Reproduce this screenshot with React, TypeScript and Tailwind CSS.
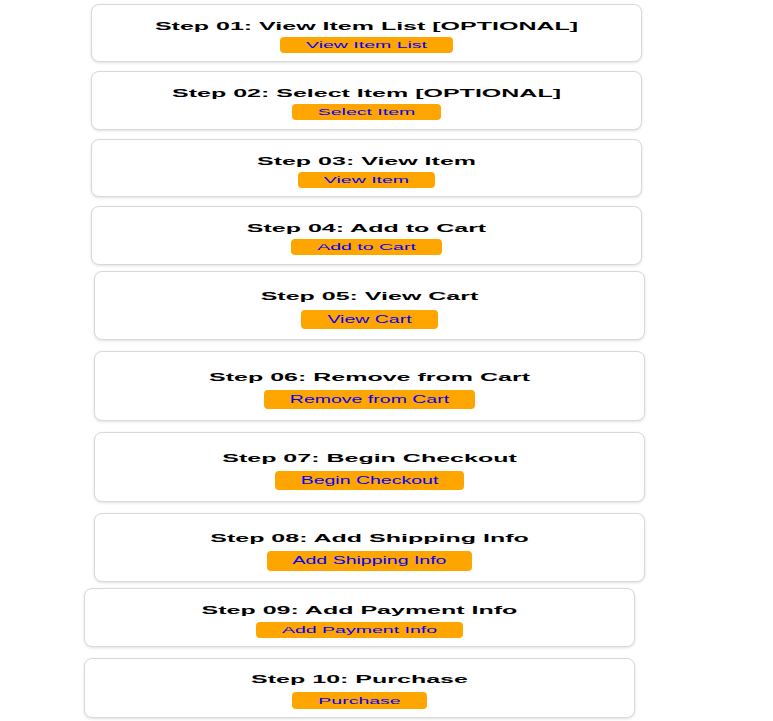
import React from 'react';

interface Step {
  id: string;
  title: string;
  label: string;
  cardClass: string;
  titleScale: string;
  buttonClass: string;
  buttonScale: string;
}

const FONT = { fontFamily: '"Liberation Sans", Arial, sans-serif' };

const steps: Step[] = [
  {
    id: '01',
    title: 'Step 01: View Item List [OPTIONAL]',
    label: 'View Item List',
    cardClass: 'mt-[4px] ml-[91px] h-[58px] pt-[14px]',
    titleScale: 'scale-y-[0.43]',
    buttonClass: 'h-[16px] mt-[4px]',
    buttonScale: 'scale-y-[0.5]',
  },
  {
    id: '02',
    title: 'Step 02: Select Item [OPTIONAL]',
    label: 'Select Item',
    cardClass: 'mt-[9px] ml-[91px] h-[59px] pt-[14px]',
    titleScale: 'scale-y-[0.43]',
    buttonClass: 'h-[16px] mt-[4px]',
    buttonScale: 'scale-y-[0.5]',
  },
  {
    id: '03',
    title: 'Step 03: View Item',
    label: 'View Item',
    cardClass: 'mt-[9px] ml-[91px] h-[58px] pt-[14px]',
    titleScale: 'scale-y-[0.43]',
    buttonClass: 'h-[16px] mt-[4px]',
    buttonScale: 'scale-y-[0.5]',
  },
  {
    id: '04',
    title: 'Step 04: Add to Cart',
    label: 'Add to Cart',
    cardClass: 'mt-[9px] ml-[91px] h-[59px] pt-[14px]',
    titleScale: 'scale-y-[0.43]',
    buttonClass: 'h-[16px] mt-[4px]',
    buttonScale: 'scale-y-[0.5]',
  },
  {
    id: '05',
    title: 'Step 05: View Cart',
    label: 'View Cart',
    cardClass: 'mt-[6px] ml-[94px] h-[69px] pt-[17px]',
    titleScale: 'scale-y-[0.47]',
    buttonClass: 'h-[19px] mt-[7px]',
    buttonScale: 'scale-y-[0.54]',
  },
  {
    id: '06',
    title: 'Step 06: Remove from Cart',
    label: 'Remove from Cart',
    cardClass: 'mt-[11px] ml-[94px] h-[70px] pt-[18px]',
    titleScale: 'scale-y-[0.47]',
    buttonClass: 'h-[19px] mt-[6px]',
    buttonScale: 'scale-y-[0.54]',
  },
  {
    id: '07',
    title: 'Step 07: Begin Checkout',
    label: 'Begin Checkout',
    cardClass: 'mt-[11px] ml-[94px] h-[70px] pt-[18px]',
    titleScale: 'scale-y-[0.47]',
    buttonClass: 'h-[19px] mt-[6px]',
    buttonScale: 'scale-y-[0.54]',
  },
  {
    id: '08',
    title: 'Step 08: Add Shipping Info',
    label: 'Add Shipping Info',
    cardClass: 'mt-[11px] ml-[94px] h-[69px] pt-[17px]',
    titleScale: 'scale-y-[0.47]',
    buttonClass: 'h-[20px] mt-[6px]',
    buttonScale: 'scale-y-[0.54]',
  },
  {
    id: '09',
    title: 'Step 09: Add Payment Info',
    label: 'Add Payment Info',
    cardClass: 'mt-[6px] ml-[84px] h-[59px] pt-[14px]',
    titleScale: 'scale-y-[0.43]',
    buttonClass: 'h-[16px] mt-[5px]',
    buttonScale: 'scale-y-[0.5]',
  },
  {
    id: '10',
    title: 'Step 10: Purchase',
    label: 'Purchase',
    cardClass: 'mt-[11px] ml-[84px] h-[60px] pt-[13px]',
    titleScale: 'scale-y-[0.43]',
    buttonClass: 'h-[17px] mt-[6px]',
    buttonScale: 'scale-y-[0.5]',
  },
];

const StepCard: React.FC<{ step: Step }> = ({ step }) => {
  return (
    <div
      className={`w-[551px] flex flex-col items-center bg-white border border-[#d9d9d9] rounded-[8px] shadow-[0_1px_3px_rgba(0,0,0,0.12)] ${step.cardClass}`}
    >
      <div className="h-[14px] w-full flex items-center justify-center">
        <span className={`inline-block whitespace-nowrap text-[25px] leading-none font-bold text-black ${step.titleScale}`}>
          {step.title}
        </span>
      </div>
      <button
        className={`flex items-center justify-center px-[26px] bg-[#ffa500] rounded-[4px] ${step.buttonClass}`}
      >
        <span className={`inline-block whitespace-nowrap text-[19.5px] leading-none text-[#0000ff] ${step.buttonScale}`}>
          {step.label}
        </span>
      </button>
    </div>
  );
};

const App: React.FC = () => {
  return (
    <div className="w-[773px] min-h-[721px] bg-white flex flex-col" style={FONT}>
      {steps.map(s => (
        <StepCard key={s.id} step={s} />
      ))}
    </div>
  );
};

export default App;
